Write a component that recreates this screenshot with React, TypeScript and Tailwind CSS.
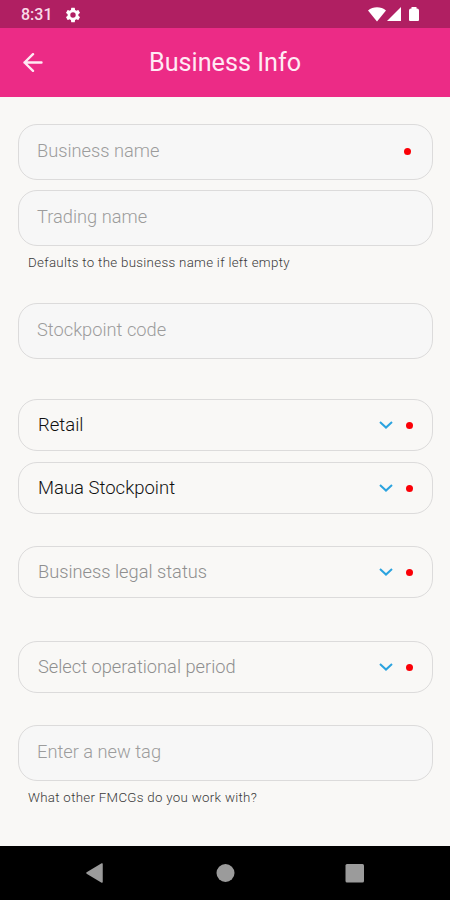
import { clsx } from "clsx";

type FieldProps = {
	label: string;
	required?: boolean;
	className?: string;
};

function RequiredDot() {
	return <span className="block size-[7px] shrink-0 rounded-full bg-[#fb0007]" />;
}

function TextField({ label, required, className }: FieldProps) {
	return (
		<div
			className={clsx(
				"flex h-14 items-center justify-between rounded-[19px] border border-[#dcdbdb] bg-[#f7f7f7] pr-[21px] pb-[3px] pl-[18px]",
				className,
			)}
		>
			<span className="text-[18.25px] leading-6 font-light text-[#9c9c9c]">
				{label}
			</span>
			{required && (
				<span className="pt-[2px]">
					<RequiredDot />
				</span>
			)}
		</div>
	);
}

function SelectField({
	label,
	selected,
	className,
}: FieldProps & { selected?: boolean }) {
	return (
		<div
			className={clsx(
				"flex h-[52px] items-center rounded-[19px] border border-[#dcdbdb] px-[19px]",
				className,
			)}
		>
			<span
				className={clsx(
					"grow leading-6 font-light",
					selected
						? "text-[18.5px] text-[#101010]"
						: "text-[18.25px] text-[#8f8f8f]",
				)}
			>
				{label}
			</span>
			<svg
				className="mr-[13px] h-2 w-[14px]"
				viewBox="0 0 14 8"
				fill="none"
				stroke="#2ba3df"
				strokeWidth="2"
			>
				<path d="M1 1l6 5.6L13 1" />
			</svg>
			<RequiredDot />
		</div>
	);
}

function Hint({ children }: { children: string }) {
	return (
		<p className="mt-2 ml-[10px] text-[13.3px] leading-[18px] font-light tracking-[0.3px] text-[#3a3a3a]">
			{children}
		</p>
	);
}

function StatusBar() {
	return (
		<div className="flex h-7 items-center bg-[#b01f62] pt-[2px] pr-[30px] pl-[21px] text-white">
			<span className="w-[43px] text-[16px] leading-5 font-medium text-[#f9dbe9]">
				8:31
			</span>
			<svg className="size-[18px]" viewBox="0 0 24 24" fill="currentColor">
				<path d="M19.14 12.94c.04-.3.06-.61.06-.94s-.02-.64-.07-.94l2.03-1.58a.49.49 0 0 0 .12-.61l-1.92-3.32a.49.49 0 0 0-.59-.22l-2.39.96c-.5-.38-1.03-.7-1.62-.94l-.36-2.54a.48.48 0 0 0-.48-.41h-3.84a.48.48 0 0 0-.47.41l-.36 2.54c-.59.24-1.13.57-1.62.94l-2.39-.96a.48.48 0 0 0-.59.22L2.74 8.87a.48.48 0 0 0 .12.61l2.03 1.58c-.05.3-.09.63-.09.94s.02.64.07.94l-2.03 1.58a.49.49 0 0 0-.12.61l1.92 3.32c.12.22.37.29.59.22l2.39-.96c.5.38 1.03.7 1.62.94l.36 2.54c.05.24.24.41.48.41h3.84c.24 0 .44-.17.47-.41l.36-2.54c.59-.24 1.13-.56 1.62-.94l2.39.96c.22.08.47 0 .59-.22l1.92-3.32a.48.48 0 0 0-.12-.61zM12 15.6a3.6 3.6 0 1 1 0-7.2 3.6 3.6 0 0 1 0 7.2z" />
			</svg>
			<svg
				className="ml-auto h-4 w-[52px]"
				viewBox="0 0 52 16"
				fill="currentColor"
			>
				<path d="M0 3.5C5-.8 13-.8 18 3.500L9 14.5z" />
				<path d="M33 0v14H19z" />
				<path d="M43.5 0h5v1.5h.5a2 2 0 0 1 2 2V13a1 1 0 0 1-1 1h-8a1 1 0 0 1-1-1V3.5a2 2 0 0 1 2-2h.5z" />
			</svg>
		</div>
	);
}

function AppBar() {
	return (
		<header className="grid h-[69px] grid-cols-[1fr_auto_1fr] items-center bg-[#ec2b86] text-[#ffeaf4]">
			<svg
				className="ml-[23px] size-5"
				viewBox="0 0 20 20"
				fill="none"
				stroke="currentColor"
				strokeWidth="2.4"
				strokeLinecap="round"
				strokeLinejoin="round"
			>
				<path d="M18.5 9.5H1.5M10 1.2L1.5 9.5l8.5 8.3" />
			</svg>
			<h1 className="text-[25.2px] leading-8">Business Info</h1>
		</header>
	);
}

function NavigationBar() {
	return (
		<nav className="h-[54px] bg-black">
			<svg className="h-[54px] w-full" viewBox="0 0 450 54" fill="#9b9b9b">
				<path
					d="M87 27l15-9v18z"
					stroke="#9b9b9b"
					strokeWidth="1.5"
					strokeLinejoin="round"
				/>
				<circle cx="225.5" cy="27" r="9" />
				<rect x="345.5" y="18" width="18.5" height="18.5" rx="1.5" />
			</svg>
		</nav>
	);
}

export default function App() {
	return (
		<div className="flex h-[900px] w-[450px] flex-col overflow-hidden bg-[#f9f8f6] font-['Roboto',sans-serif]">
			<StatusBar />
			<AppBar />
			<main className="flex grow flex-col pt-[27px] pr-[17px] pl-[18px]">
				<TextField label="Business name" required />
				<TextField label="Trading name" className="mt-[10px]" />
				<Hint>Defaults to the business name if left empty</Hint>
				<TextField label="Stockpoint code" className="mt-[31px]" />
				<SelectField label="Retail" selected className="mt-10" />
				<SelectField label="Maua Stockpoint" selected className="mt-[11px]" />
				<SelectField label="Business legal status" className="mt-8" />
				<SelectField label="Select operational period" className="mt-[43px]" />
				<TextField label="Enter a new tag" className="mt-8" />
				<Hint>What other FMCGs do you work with?</Hint>
			</main>
			<NavigationBar />
		</div>
	);
}
